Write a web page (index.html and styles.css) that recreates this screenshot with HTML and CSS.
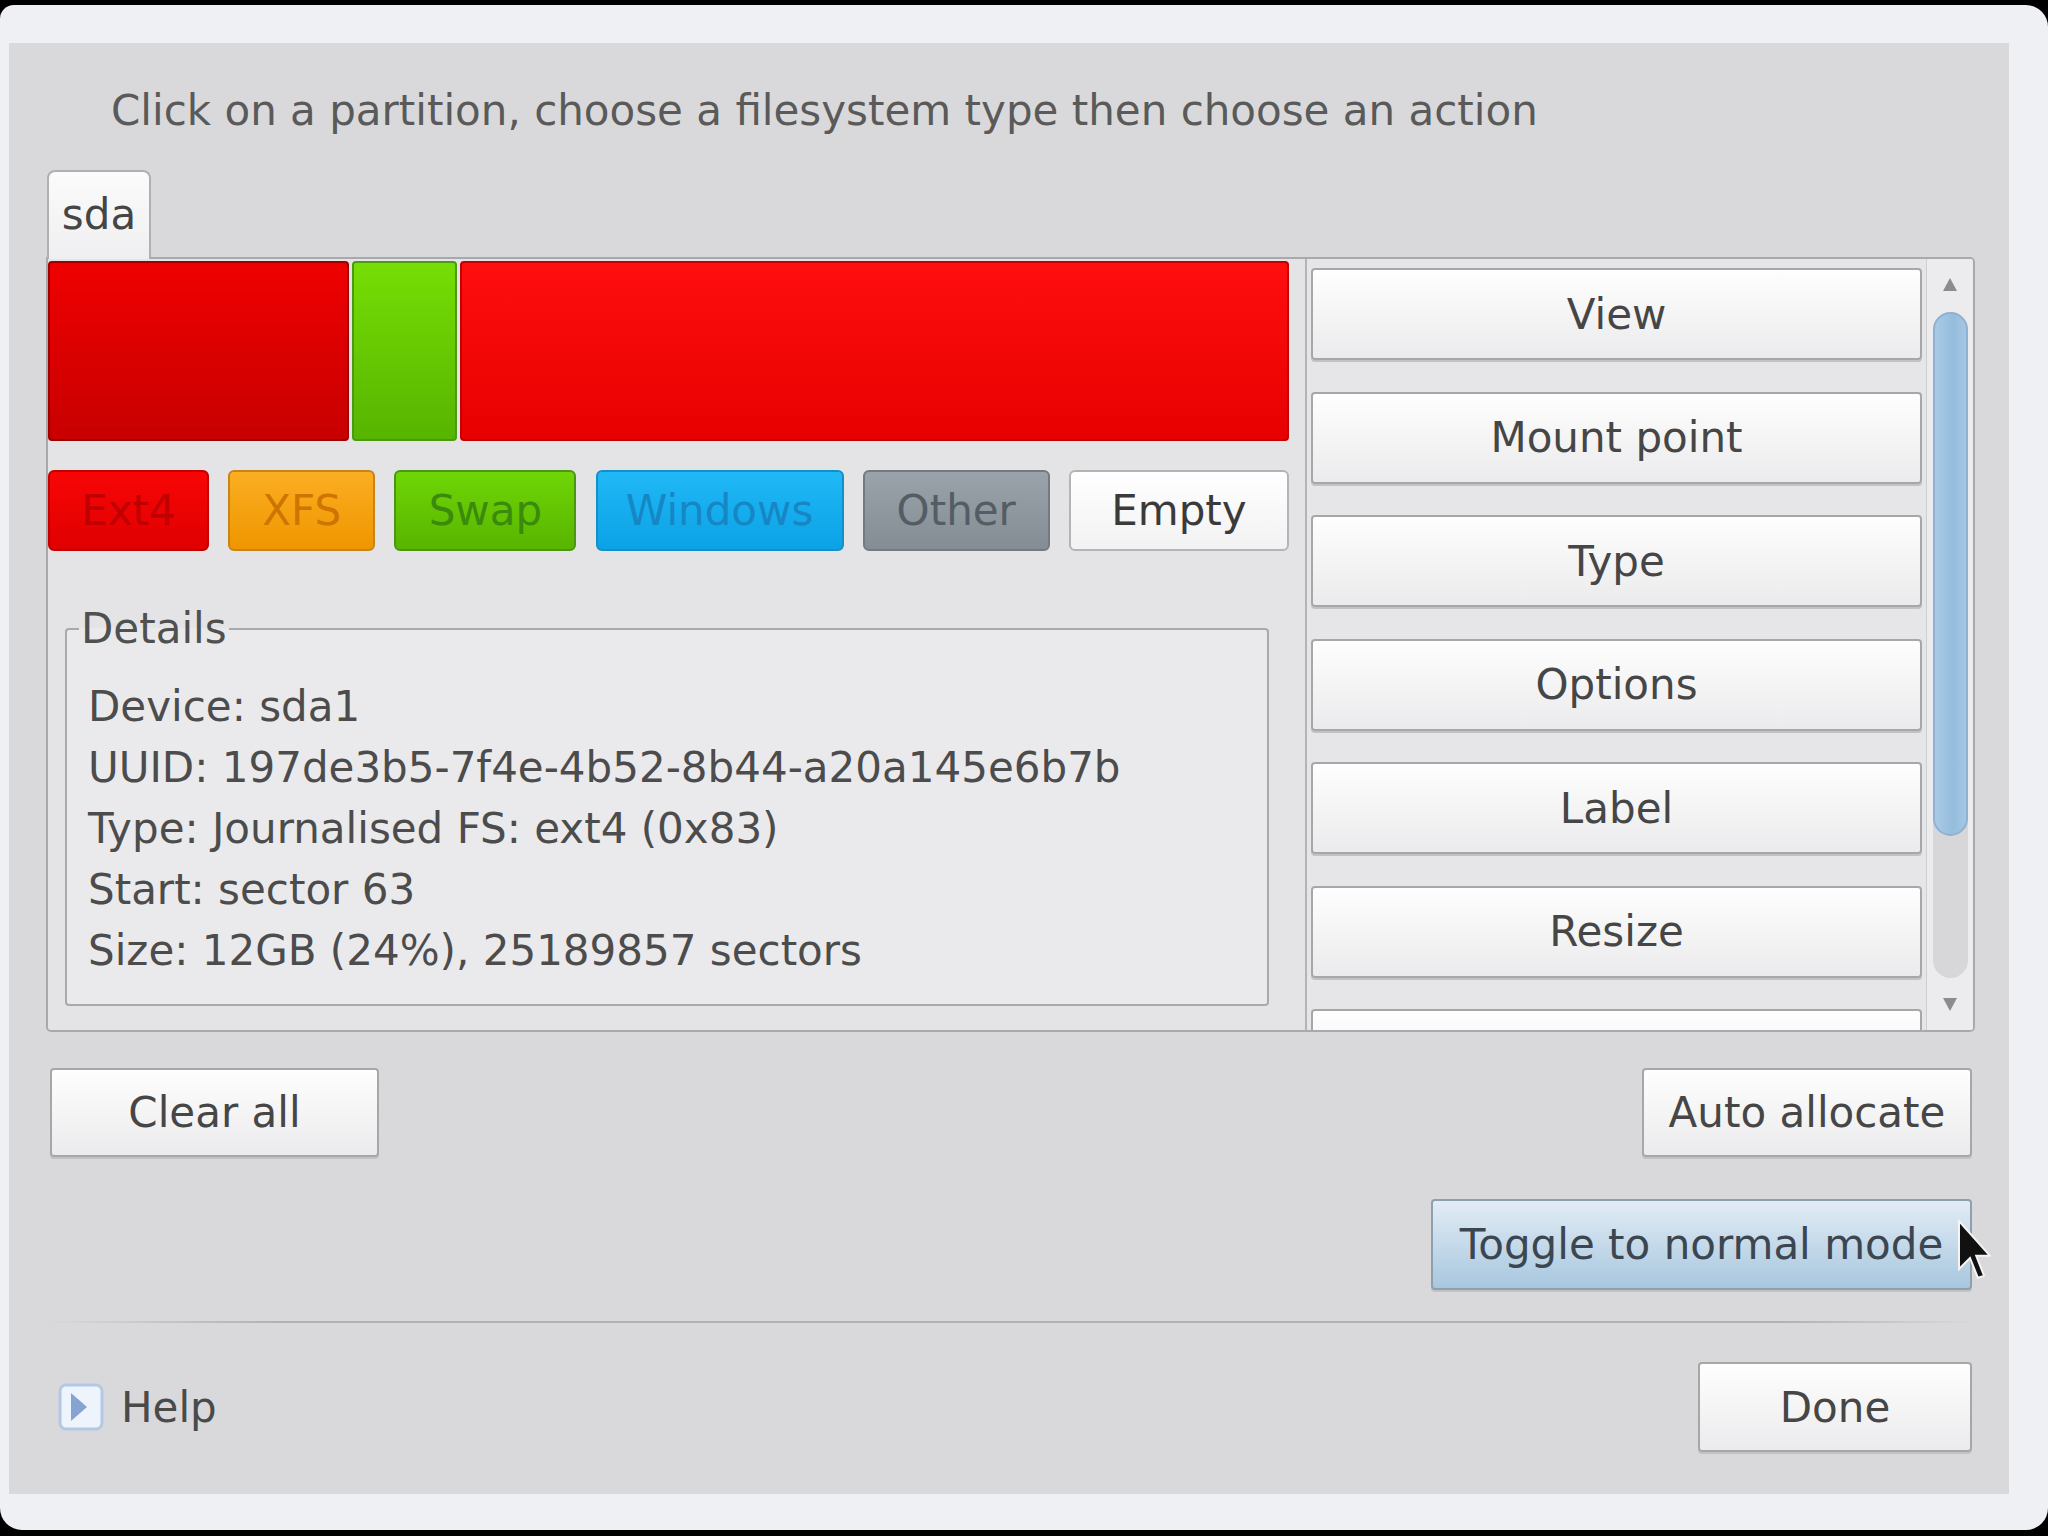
FILE: index.html
```html
<!DOCTYPE html>
<html lang="en">
<head>
    <meta charset="UTF-8">
    <title>Partitioning</title>
    <link rel="stylesheet" href="styles.css">
</head>
<body>
    <div class="window">
        <div class="dialog">
            <p class="intro">Click on a partition, choose a filesystem type then choose an action</p>

            <div class="tab-strip">
                <div class="tab">sda</div>
            </div>

            <div class="panel">
                <div class="disk">
                    <div class="bar">
                        <div class="part part-ext4 selected" style="width: 301px"></div>
                        <div class="part part-swap" style="width: 105px"></div>
                        <div class="part part-ext4 rest"></div>
                    </div>

                    <div class="legend">
                        <div class="fs fs-ext4">Ext4</div>
                        <div class="fs fs-xfs">XFS</div>
                        <div class="fs fs-swap">Swap</div>
                        <div class="fs fs-windows">Windows</div>
                        <div class="fs fs-other">Other</div>
                        <div class="fs fs-empty">Empty</div>
                    </div>

                    <fieldset class="details">
                        <legend>Details</legend>
                        <div>Device: sda1</div>
                        <div>UUID: 197de3b5-7f4e-4b52-8b44-a20a145e6b7b</div>
                        <div>Type: Journalised FS: ext4 (0x83)</div>
                        <div>Start: sector 63</div>
                        <div>Size: 12GB (24%), 25189857 sectors</div>
                    </fieldset>
                </div>

                <div class="actions">
                    <div class="action-list">
                        <button class="btn action">View</button>
                        <button class="btn action">Mount point</button>
                        <button class="btn action">Type</button>
                        <button class="btn action">Options</button>
                        <button class="btn action">Label</button>
                        <button class="btn action">Resize</button>
                        <!-- next action is scrolled out of view -->
                        <button class="btn action"></button>
                    </div>
                    <div class="scrollbar">
                        <div class="scroll-arrow">
                            <svg width="14" height="13" viewBox="0 0 14 13"><path d="M7 0 L14 13 L0 13 Z" fill="#8c8c8e"/></svg>
                        </div>
                        <div class="groove">
                            <div class="thumb"></div>
                        </div>
                        <div class="scroll-arrow down">
                            <svg width="14" height="13" viewBox="0 0 14 13"><path d="M0 0 L14 0 L7 13 Z" fill="#8c8c8e"/></svg>
                        </div>
                    </div>
                </div>
            </div>

            <div class="row row-top">
                <button class="btn clear">Clear all</button>
                <button class="btn auto">Auto allocate</button>
            </div>

            <div class="row row-toggle">
                <div class="toggle-wrap">
                    <button class="btn toggle">Toggle to normal mode</button>
                    <svg class="pointer" width="34" height="62" viewBox="0 0 17 31">
                        <path d="M1 1 L1 25 L6.5 19.5 L10.5 29.5 L13.5 28.3 L9.6 18.4 L16.5 18.4 Z" fill="#111" stroke="#f4f4f4" stroke-width="1"/>
                    </svg>
                </div>
            </div>

            <hr class="sep">

            <div class="row footer">
                <div class="help">
                    <svg width="46" height="48" viewBox="0 0 46 48">
                        <rect x="2" y="2" width="42" height="44" rx="6" fill="#eef4fc" stroke="#b4c8e6" stroke-width="3"/>
                        <path d="M13 10 L29 24 L13 38 Z" fill="#86a3d2"/>
                    </svg>
                    <span>Help</span>
                </div>
                <button class="btn done">Done</button>
            </div>
        </div>
    </div>
</body>
</html>
```

FILE: styles.css
```css
body {
    margin: 0;
    background-color: #000;
    font-family: "DejaVu Sans", sans-serif;
    font-size: 42px;
    color: #4a4a4a;
}
.window {
    margin-top: 5px;
    width: 2048px;
    height: 1525px;
    box-sizing: border-box;
    padding: 38px 39px 36px 9px;
    background-color: #eef0f4;
    border-radius: 14px 22px 22px 22px;
}
.dialog {
    height: 100%;
    box-sizing: border-box;
    padding: 43px 34px 0 37px;
    background-color: #d9d9db;
}
.intro {
    margin: 0 0 0 65px;
    line-height: 50px;
    color: #5a5a5a;
}
.tab-strip {
    display: flex;
    margin-top: 34px;
    padding-left: 1px;
}
.tab {
    position: relative;
    z-index: 1;
    width: 104px;
    height: 89px;
    margin-bottom: -2px;
    box-sizing: border-box;
    border: 2px solid #b0b0b2;
    border-bottom: none;
    border-radius: 8px 8px 0 0;
    background: linear-gradient(#fbfbfb, #efeff1);
    display: flex;
    align-items: center;
    justify-content: center;
    padding-bottom: 2px;
    color: #454545;
}
.panel {
    display: flex;
    gap: 16px;
    height: 775px;
    box-sizing: border-box;
    border: 2px solid #a9a9ab;
    border-radius: 0 5px 5px 5px;
    background-color: #e4e4e6;
    overflow: hidden;
}
.disk {
    width: 1241px;
    flex-shrink: 0;
    padding-top: 2px;
}
.bar {
    display: flex;
    gap: 3px;
    height: 180px;
}
.part {
    box-sizing: border-box;
    border: 2px solid;
    border-radius: 4px;
}
.part-ext4 {
    background: linear-gradient(#ff0e0e, #e70000);
    border-color: #c50000;
}
.part-ext4.selected {
    background: linear-gradient(#ef0000, #c80000);
    border-color: #9e0000;
}
.part-swap {
    background: linear-gradient(#76de05, #57b400);
    border-color: #4b9a12;
}
.rest {
    flex: 1;
}
.legend {
    display: flex;
    justify-content: space-between;
    margin-top: 29px;
    height: 81px;
}
.fs {
    box-sizing: border-box;
    border: 2px solid;
    border-radius: 6px;
    display: flex;
    align-items: center;
    justify-content: center;
}
.fs-ext4 {
    width: 161px;
    background: linear-gradient(#f80606, #e00000);
    border-color: #c20000;
    color: #c00000;
}
.fs-xfs {
    width: 147px;
    background: linear-gradient(#fbae22, #ef9600);
    border-color: #c98418;
    color: #cf7400;
}
.fs-swap {
    width: 182px;
    background: linear-gradient(#6fd606, #58b400);
    border-color: #4c9614;
    color: #3a8a0c;
}
.fs-windows {
    width: 248px;
    background: linear-gradient(#20b8f6, #0ca2e6);
    border-color: #1490c8;
    color: #1686c4;
}
.fs-other {
    width: 187px;
    background: linear-gradient(#9aa2aa, #848c94);
    border-color: #737a82;
    color: #545c66;
}
.fs-empty {
    width: 220px;
    background: linear-gradient(#ffffff, #f2f2f2);
    border-color: #b4b4b6;
    color: #3a3a3a;
}
.details {
    margin: 56px 20px 0 17px;
    padding: 25px 14px 23px 21px;
    border: 2px solid #a9a9ab;
    border-radius: 4px;
    background-color: #eaeaec;
    line-height: 61px;
    color: #4c4c4c;
}
.details legend {
    margin-left: -9px;
    padding: 0 2px;
    line-height: 44px;
    color: #505050;
}
.actions {
    flex: 1;
    display: flex;
    border-left: 2px solid #b4b4b6;
    background-color: #e6e6e8;
    overflow: hidden;
}
.action-list {
    width: 611px;
    flex-shrink: 0;
    display: flex;
    flex-direction: column;
    gap: 31.5px;
    padding: 9px 0 0 4px;
}
.btn {
    box-sizing: border-box;
    border: 2px solid #a7a7a9;
    border-radius: 4px;
    background: linear-gradient(#fefefe, #ebebed);
    box-shadow: 0 2px 0 #c2c2c4;
    font-family: inherit;
    font-size: 42px;
    color: #464646;
    padding: 0;
    display: flex;
    align-items: center;
    justify-content: center;
}
.action {
    height: 92px;
    flex-shrink: 0;
}
.scrollbar {
    width: 46px;
    margin-left: 4px;
    display: flex;
    flex-direction: column;
    align-items: center;
    background-color: #ececee;
    border-left: 1px solid #cfcfd1;
}
.scroll-arrow {
    height: 50px;
    display: flex;
    align-items: center;
    justify-content: center;
}
.scroll-arrow.down {
    height: 52px;
}
.groove {
    width: 35px;
    height: 666px;
    margin-top: 3px;
    border-radius: 18px;
    background-color: #d7d7d9;
}
.thumb {
    height: 524px;
    box-sizing: border-box;
    border: 2px solid #8fb2d2;
    border-radius: 18px;
    background: linear-gradient(to right, #a9cbe6, #95bddd 60%, #a5c7e3);
}
.row {
    display: flex;
}
.row-top {
    margin-top: 36px;
    justify-content: space-between;
    padding: 0 3px 0 4px;
}
.clear {
    width: 329px;
    height: 89px;
}
.auto {
    width: 330px;
    height: 89px;
}
.row-toggle {
    margin-top: 42px;
    justify-content: flex-end;
    padding-right: 3px;
}
.toggle-wrap {
    position: relative;
}
.toggle {
    width: 541px;
    height: 91px;
    border-color: #8e9fae;
    background: linear-gradient(#e2ecf5, #a8c7df);
    color: #3c4650;
}
.pointer {
    position: absolute;
    left: 526px;
    top: 20px;
}
.sep {
    margin: 31px 0 0;
    height: 2px;
    border: none;
    background: linear-gradient(to right, rgba(176, 176, 178, 0), #b2b2b4 12%, #b2b2b4 90%, rgba(176, 176, 178, 0));
}
.footer {
    margin-top: 39px;
    justify-content: space-between;
    align-items: center;
    padding-right: 3px;
}
.help {
    display: flex;
    align-items: center;
    gap: 17px;
    margin-left: 12px;
    color: #4a4a4a;
}
.done {
    width: 274px;
    height: 90px;
}
```
